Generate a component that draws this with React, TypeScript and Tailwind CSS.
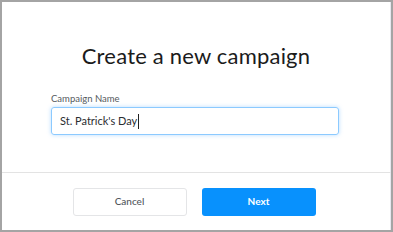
export default function App() {
  return (
    <div
      className="w-[393px] h-[232px] bg-white border-2 border-[#a4a4a4] flex flex-col"
      style={{ fontFamily: 'Lato, "Open Sans", sans-serif' }}
    >
      <div className="h-[171px] border-b border-[#e3e3e3] border-r border-r-[#e8e8f0] pt-[40px]">
        <h1 className="text-center text-[22px] leading-[28px] text-[#1b1b1b] tracking-[0.2px]">
          Create a new campaign
        </h1>
        <div className="ml-[49px] w-[288px] mt-[23px]">
          <label className="block text-[9.5px] leading-[12px] text-[#555a60] mb-[2px]">
            Campaign Name
          </label>
          <div className="h-[28px] rounded-[3px] border border-[#8ccaff] shadow-[0_0_4px_rgba(100,180,255,0.45)] flex items-center pl-[8px]">
            <span className="text-[11px] text-[#2a2d31]">St. Patrick's Day</span>
            <span className="w-px h-[15px] bg-[#222] ml-px" />
          </div>
        </div>
      </div>
      <div className="flex-1 border-r border-[#e8e8f0] flex items-center justify-center gap-[15px] pr-[4px]">
        <button className="w-[114px] h-[28px] rounded-[3px] border border-[#e4e5e7] bg-white text-[10px] font-medium text-[#50565c]">
          Cancel
        </button>
        <button className="w-[114px] h-[28px] rounded-[3px] bg-[#0891fd] text-[10px] font-bold text-white">
          Next
        </button>
      </div>
    </div>
  );
}
